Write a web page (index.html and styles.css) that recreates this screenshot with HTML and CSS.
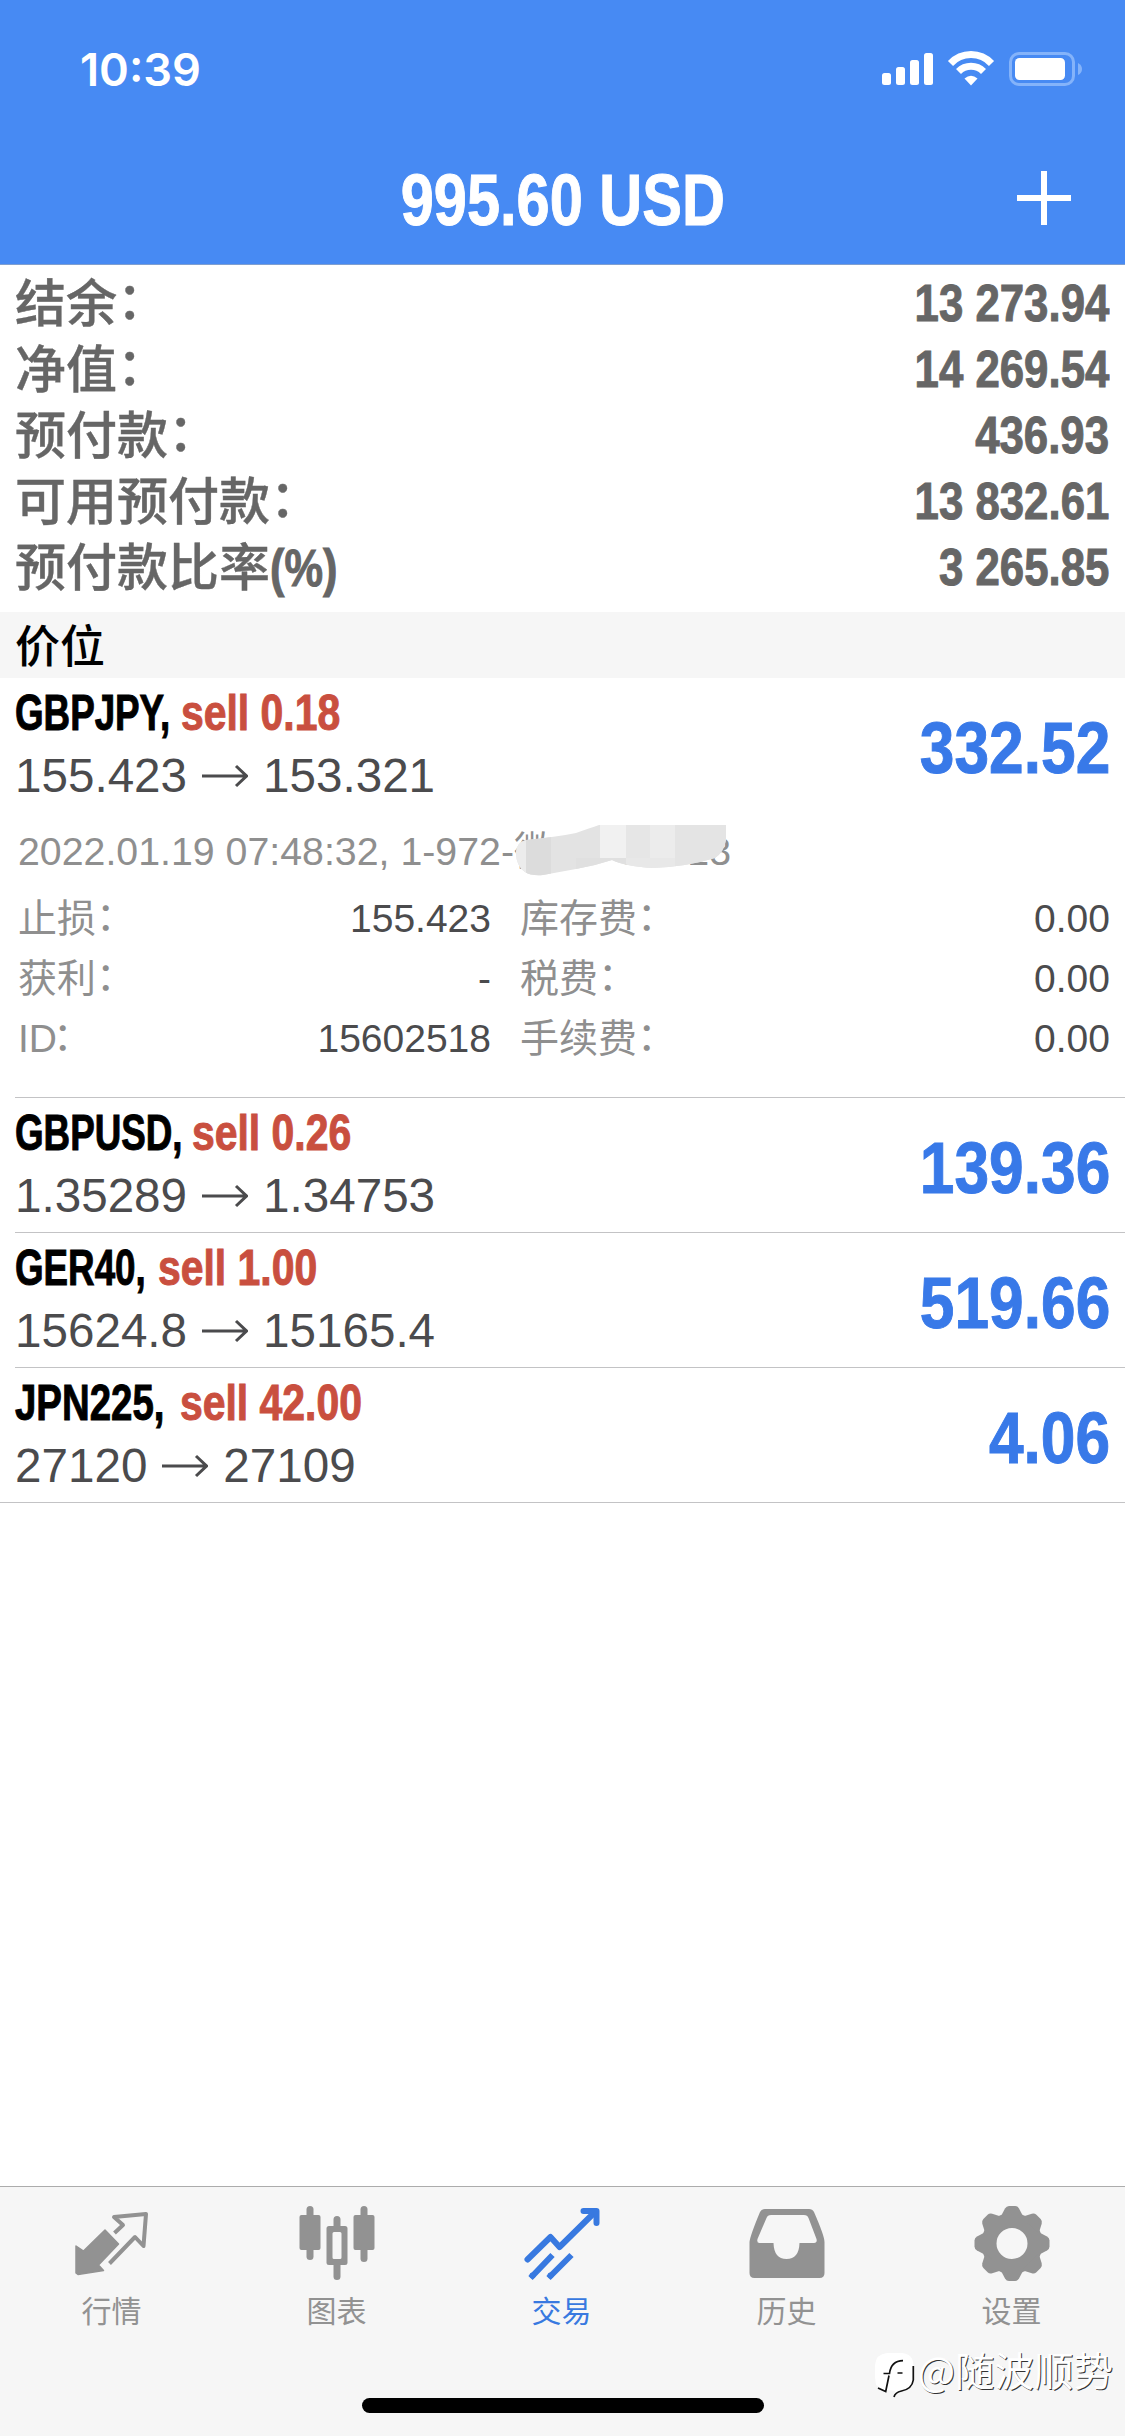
FILE: index.html
```html
<!DOCTYPE html>
<html lang="zh-CN">
<head>
<meta charset="utf-8">
<title>交易</title>
<link rel="stylesheet" href="styles.css">
</head>
<body>
<div class="app">
  <header class="header">
    <div class="status">
      <span class="clock">10:39</span>
      <svg class="status-icons" width="204" height="36" viewBox="0 0 204 36">
        <g fill="#fff">
          <rect x="2" y="22" width="9" height="12" rx="2.5"/>
          <rect x="16" y="16" width="9" height="18" rx="2.5"/>
          <rect x="30" y="9" width="9" height="25" rx="2.5"/>
          <rect x="44" y="2" width="9" height="32" rx="2.5"/>
        </g>
        <g fill="none" stroke="#fff" stroke-width="7">
          <path d="M70.5 12.500 A28 28 0 0 1 111.500 12.500"/>
          <path d="M78.500 20.500 A17.500 17.500 0 0 1 103.500 20.500"/>
        </g>
        <path d="M91 34.500 L84.500 27.500 Q91 22 97.500 27.500 Z" fill="#fff"/>
        <rect x="130.500" y="2.500" width="63" height="31" rx="8.500" fill="none" stroke="#84b3fa" stroke-width="3"/>
        <rect x="135" y="7" width="50" height="22" rx="4.500" fill="#fff"/>
        <path d="M198 12 Q202 14 202 18 Q202 22 198 24 Z" fill="#84b3fa"/>
      </svg>
    </div>
    <div class="navbar">
      <span class="nav-side"></span>
      <h1 class="nav-title condensed">995.60 USD</h1>
      <span class="nav-side">
        <svg width="54" height="54" viewBox="0 0 54 54"><path d="M27 0V54M0 27H54" stroke="#fff" stroke-width="6"/></svg>
      </span>
    </div>
  </header>

  <section class="summary">
    <div class="summary-row"><span>结余<i>：</i></span><b class="condensed">13 273.94</b></div>
    <div class="summary-row"><span>净值<i>：</i></span><b class="condensed">14 269.54</b></div>
    <div class="summary-row"><span>预付款<i>：</i></span><b class="condensed">436.93</b></div>
    <div class="summary-row"><span>可用预付款<i>：</i></span><b class="condensed">13 832.61</b></div>
    <div class="summary-row"><span>预付款比率<em class="condensed">(%)</em></span><b class="condensed">3 265.85</b></div>
  </section>

  <h2 class="section-title">价位</h2>

  <main class="positions">
    <article class="position">
      <div class="position-main">
        <div>
          <div class="symbol"><span class="name condensed" style="--w: 166px">GBPJPY,</span><span class="side condensed">sell 0.18</span></div>
          <div class="prices">155.423<svg class="arrow" viewBox="0 0 46 24"><path d="M0 12H44M34 2L44.500 12L34 22"/></svg>153.321</div>
        </div>
        <div class="profit condensed">332.52</div>
      </div>
      <div class="details">
        <div class="opened">2022.01.19 07:48:32, 1-972-<span class="comment">微<span class="comment-mid">8</span>13
          <svg class="smudge" width="212" height="52" viewBox="0 0 212 52">
            <defs><clipPath id="smudge"><path d="M0 28Q1 18 10 16Q40 13 60 9Q74 4 83 1H210V16Q208 28 199 34Q170 43 136 44Q108 42 96 36Q78 42 60 45L27 51Q15 52 9 48Q0 42 0 28Z"/></clipPath></defs>
            <g clip-path="url(#smudge)">
              <rect width="212" height="52" fill="#e3e3e3"/>
              <rect width="10" height="52" fill="#ececec"/>
              <rect x="10" width="25" height="52" fill="#dcdcdc"/>
              <rect x="84" width="26" height="34" fill="#f1f1f1"/>
              <rect x="110" width="24" height="34" fill="#e6e6e6"/>
              <rect x="134" width="25" height="34" fill="#ececec"/>
              <rect x="159" width="53" height="52" fill="#e4e4e4"/>
              <rect x="60" y="34" width="50" height="18" fill="#e0e0e0"/>
              <rect x="110" y="34" width="49" height="18" fill="#e8e8e8"/>
            </g>
          </svg></span></div>
        <dl class="facts">
          <dt>止损<i>：</i></dt><dd>155.423</dd><dt>库存费<i>：</i></dt><dd>0.00</dd>
          <dt>获利<i>：</i></dt><dd>-</dd><dt>税费<i>：</i></dt><dd>0.00</dd>
          <dt>ID<i class="tight">：</i></dt><dd>15602518</dd><dt>手续费<i>：</i></dt><dd>0.00</dd>
        </dl>
      </div>
    </article>
    <article class="position">
      <div class="position-main">
        <div>
          <div class="symbol"><span class="name condensed" style="--w: 177px">GBPUSD,</span><span class="side condensed">sell 0.26</span></div>
          <div class="prices">1.35289<svg class="arrow" viewBox="0 0 46 24"><path d="M0 12H44M34 2L44.500 12L34 22"/></svg>1.34753</div>
        </div>
        <div class="profit condensed">139.36</div>
      </div>
    </article>
    <article class="position">
      <div class="position-main">
        <div>
          <div class="symbol"><span class="name condensed" style="--w: 143px">GER40,</span><span class="side condensed">sell 1.00</span></div>
          <div class="prices">15624.8<svg class="arrow" viewBox="0 0 46 24"><path d="M0 12H44M34 2L44.500 12L34 22"/></svg>15165.4</div>
        </div>
        <div class="profit condensed">519.66</div>
      </div>
    </article>
    <article class="position">
      <div class="position-main">
        <div>
          <div class="symbol"><span class="name wide condensed" style="--w: 165px">JPN225,</span><span class="side condensed">sell 42.00</span></div>
          <div class="prices">27120<svg class="arrow" viewBox="0 0 46 24"><path d="M0 12H44M34 2L44.500 12L34 22"/></svg>27109</div>
        </div>
        <div class="profit condensed">4.06</div>
      </div>
    </article>
  </main>

  <footer class="footer">
    <nav class="tabs">
      <a class="tab">
        <svg width="80" height="80" viewBox="0 0 80 80">
          <path d="M4 42L11.500 47L33 26L46.500 40L26.500 61L31.500 66.500L6 70.500L4 69Z" fill="currentColor" stroke="currentColor" stroke-width="1.500" stroke-linejoin="round"/>
          <path d="M42.500 29L51 21L42 13L74 10L71.500 42L63 33L37.500 59.500" fill="none" stroke="currentColor" stroke-width="4" stroke-linejoin="round"/>
        </svg>
        <span>行情</span>
      </a>
      <a class="tab">
        <svg width="80" height="80" viewBox="0 0 80 80">
          <g fill="currentColor">
            <rect x="9.500" y="2" width="7" height="54" rx="3.500"/>
            <rect x="2.500" y="11" width="21" height="35" rx="2"/>
            <rect x="63.500" y="2" width="7" height="56" rx="3.500"/>
            <rect x="56.500" y="11" width="21" height="35" rx="2"/>
            <path d="M36.500 22V15.500a3.500 3.500 0 0 1 7 0V22H48a2.500 2.500 0 0 1 2.500 2.500V58.500A2.500 2.500 0 0 1 48 61H43.500V72.500a3.500 3.500 0 0 1-7 0V61H32a2.500 2.500 0 0 1-2.500-2.500V24.500A2.500 2.500 0 0 1 32 22ZM37 28a1.500 1.500 0 0 0-1.500 1.500V53.500A1.500 1.500 0 0 0 37 55H43a1.500 1.500 0 0 0 1.500-1.500V29.500A1.500 1.500 0 0 0 43 28Z" fill-rule="evenodd"/>
          </g>
        </svg>
        <span>图表</span>
      </a>
      <a class="tab active">
        <svg width="80" height="80" viewBox="0 0 80 80" fill="none" stroke="currentColor" stroke-width="6" stroke-linejoin="round">
          <path d="M5.500 55.500L28.500 33L37.500 43L73 8" stroke-linecap="round"/>
          <path d="M61.500 7H74.500V19" stroke-linecap="round"/>
          <path d="M8.500 74L30.500 51M26.500 74L49.500 51"/>
          <path d="M10.500 71.500h.1M28.500 71.500h.1" stroke-linecap="round"/>
        </svg>
        <span>交易</span>
      </a>
      <a class="tab">
        <svg width="80" height="80" viewBox="0 0 80 80">
          <path d="M2.500 38Q3 32 13 8Q14.500 5 18 5H62Q65.500 5 67 8Q77.500 32 77.500 38V69Q77.500 74 72.500 74H7.500Q2.500 74 2.500 69ZM24 11Q20.500 11 19.500 14L10.500 35Q9.500 39 12.500 39H26.500Q27 55 39.500 55Q52 55 52.500 39H67Q70.500 39 69.500 35L61.500 14Q60.500 11 57 11Z" fill="currentColor" fill-rule="evenodd"/>
        </svg>
        <span>历史</span>
      </a>
      <a class="tab">
        <svg width="80" height="80" viewBox="0 0 80 80">
          <defs><path id="tooth" d="M28 14L33 4.500Q34.500 2 37 2H43Q45.500 2 47 4.500L52 14Z"/></defs>
          <g fill="currentColor">
            <circle cx="40" cy="39.500" r="23" fill="none" stroke="currentColor" stroke-width="15"/>
            <use href="#tooth"/>
            <use href="#tooth" transform="rotate(45 40 39.500)"/>
            <use href="#tooth" transform="rotate(90 40 39.500)"/>
            <use href="#tooth" transform="rotate(135 40 39.500)"/>
            <use href="#tooth" transform="rotate(180 40 39.500)"/>
            <use href="#tooth" transform="rotate(225 40 39.500)"/>
            <use href="#tooth" transform="rotate(270 40 39.500)"/>
            <use href="#tooth" transform="rotate(315 40 39.500)"/>
          </g>
        </svg>
        <span>设置</span>
      </a>
    </nav>
    <div class="home-indicator"></div>
    <div class="watermark">
      <svg width="42" height="50" viewBox="0 -7 42 50" overflow="visible">
        <path d="M14 2H29Q40.300 3 40.300 14V28Q39 38 28 40Q22 41 21 46L22 40L14 39L12.700 40.500L3 34L2 26V14Q3 3 14 2Z" fill="#fff"/>
        <path d="M40.300 15V29Q39 38 28.500 40Q22 41.500 21 46M5 37L12.700 40.500L16 24.500M10.500 22.500H16.500Q18 10 30 9.700M24.500 22H29.500" fill="none" stroke="#111" stroke-width="1.700"/>
      </svg>
      <span>@随波顺势</span>
    </div>
  </footer>
</div>
</body>
</html>
```
FILE: styles.css
```css
* {
  box-sizing: border-box;
  margin: 0;
  padding: 0;
}

body {
  background: #fff;
  font-family: "Liberation Sans", "Noto Sans CJK SC", sans-serif;
}

i,
em {
  font-style: normal;
}

/* Full-width colon, lifted to the middle of the ideographs */
i {
  display: inline-block;
  line-height: 1;
  transform: translateY(-0.05em);
}

.tight {
  margin-left: -4px;
}

.app {
  display: flex;
  flex-direction: column;
  width: 1125px;
  height: 2436px;
  overflow: hidden;
}

.condensed {
  display: inline-block;
  font-family: "Liberation Sans", sans-serif;
  font-weight: 700;
  white-space: pre;
  -webkit-text-stroke: 1px currentColor;
}

.header {
  height: 265px;
  background: #478af3;
  color: #fff;
  border-bottom: 1px solid #7f9fd0;
}

.status {
  display: flex;
  justify-content: space-between;
  align-items: center;
  height: 138px;
  padding: 0 41px 0 80px;
}

.clock {
  padding-top: 1px;
  font: 600 45.2px/54px Inter, sans-serif;
}

.status-icons {
  display: block;
}

.navbar {
  display: flex;
  justify-content: space-between;
  align-items: center;
  height: 120px;
  padding: 0 54px;
}

.nav-side {
  width: 54px;
  height: 54px;
}

.nav-title {
  padding-top: 3px;
  font-size: 73px;
  line-height: 80px;
  transform: scaleX(0.815);
}

.summary {
  height: 347px;
  padding: 5px 16px 0 15px;
  color: #666;
}

.summary-row {
  display: flex;
  justify-content: space-between;
  height: 66px;
  font: 500 51px/61px "Noto Sans CJK SC", sans-serif;
  -webkit-text-stroke: 0.4px currentColor;
}

.summary-row b {
  font-size: 52px;
  line-height: 67px;
  transform: scaleX(0.842);
  transform-origin: right;
}

.summary-row em {
  font-size: 51px;
  transform: scaleX(0.85);
  transform-origin: left;
}

.section-title {
  height: 66px;
  padding-left: 15px;
  background: #f6f6f6;
  font: 500 45px/63px "Noto Sans CJK SC", sans-serif;
}

.positions {
  flex: 1;
}

.position {
  margin-left: 15px;
  border-bottom: 1px solid #c3c3c5;
}

.position:last-child {
  margin-left: 0;
  padding-left: 15px;
}

.position-main {
  display: flex;
  justify-content: space-between;
  height: 134px;
  padding-right: 15px;
}

.symbol {
  display: flex;
  padding-top: 3px;
  font-size: 50px;
  line-height: 64px;
}

.name {
  width: var(--w);
  transform: scaleX(0.735);
  transform-origin: 0 0;
}

.wide {
  transform: scaleX(0.768);
}

.side {
  color: #c94f3f;
  transform: scaleX(0.818);
  transform-origin: 0 0;
}

.prices {
  display: flex;
  align-items: center;
  gap: 15px;
  color: #4b4b4d;
  font-size: 47.6px;
  line-height: 61px;
}

.arrow {
  width: 46px;
  height: 24px;
  fill: none;
  stroke: #4b4b4d;
  stroke-width: 3;
}

.profit {
  padding-top: 2px;
  color: #3879e8;
  font-size: 73px;
  line-height: 135px;
  transform: scaleX(0.853);
  transform-origin: right;
}

.details {
  height: 285px;
  padding: 4px 15px 0 3px;
  color: #8f8f8f;
  font-size: 39px;
}

.opened {
  height: 73px;
  font-size: 39.3px;
  line-height: 71px;
  white-space: nowrap;
}

.comment {
  position: relative;
}

.comment-mid {
  display: inline-block;
  width: 134px;
  padding-left: 66px;
}

.smudge {
  position: absolute;
  left: 2px;
  top: -5px;
}

.facts {
  display: grid;
  grid-template-columns: 200px 273px 300px 1fr;
  grid-auto-rows: 60px;
  line-height: 60px;
}

.facts dt:nth-of-type(even) {
  padding-left: 29px;
}

.facts dd {
  color: #4b4b4d;
  text-align: right;
}

.footer {
  position: relative;
  height: 250px;
  background: #f6f6f6;
  border-top: 1px solid #acacac;
}

.tabs {
  display: grid;
  grid-template-columns: repeat(5, 1fr);
  height: 211px;
  margin: 0 1px 0 -1px;
  padding-top: 17px;
}

.tab {
  display: flex;
  flex-direction: column;
  align-items: center;
  color: #929292;
  font: 400 30px/44px "Noto Sans CJK SC", sans-serif;
}

.tab svg {
  margin-bottom: 3px;
}

.active {
  color: #3879e0;
}

.home-indicator {
  width: 402px;
  height: 15px;
  margin: 0 auto;
  border-radius: 8px;
  background: #000;
}

.watermark {
  position: absolute;
  right: 12px;
  top: 157px;
  display: flex;
  align-items: center;
  gap: 3px;
  color: #fff;
  font: 400 39.5px/50px "Noto Sans CJK SC", sans-serif;
  text-shadow: 1px 1px 0.5px #333;
}
```
